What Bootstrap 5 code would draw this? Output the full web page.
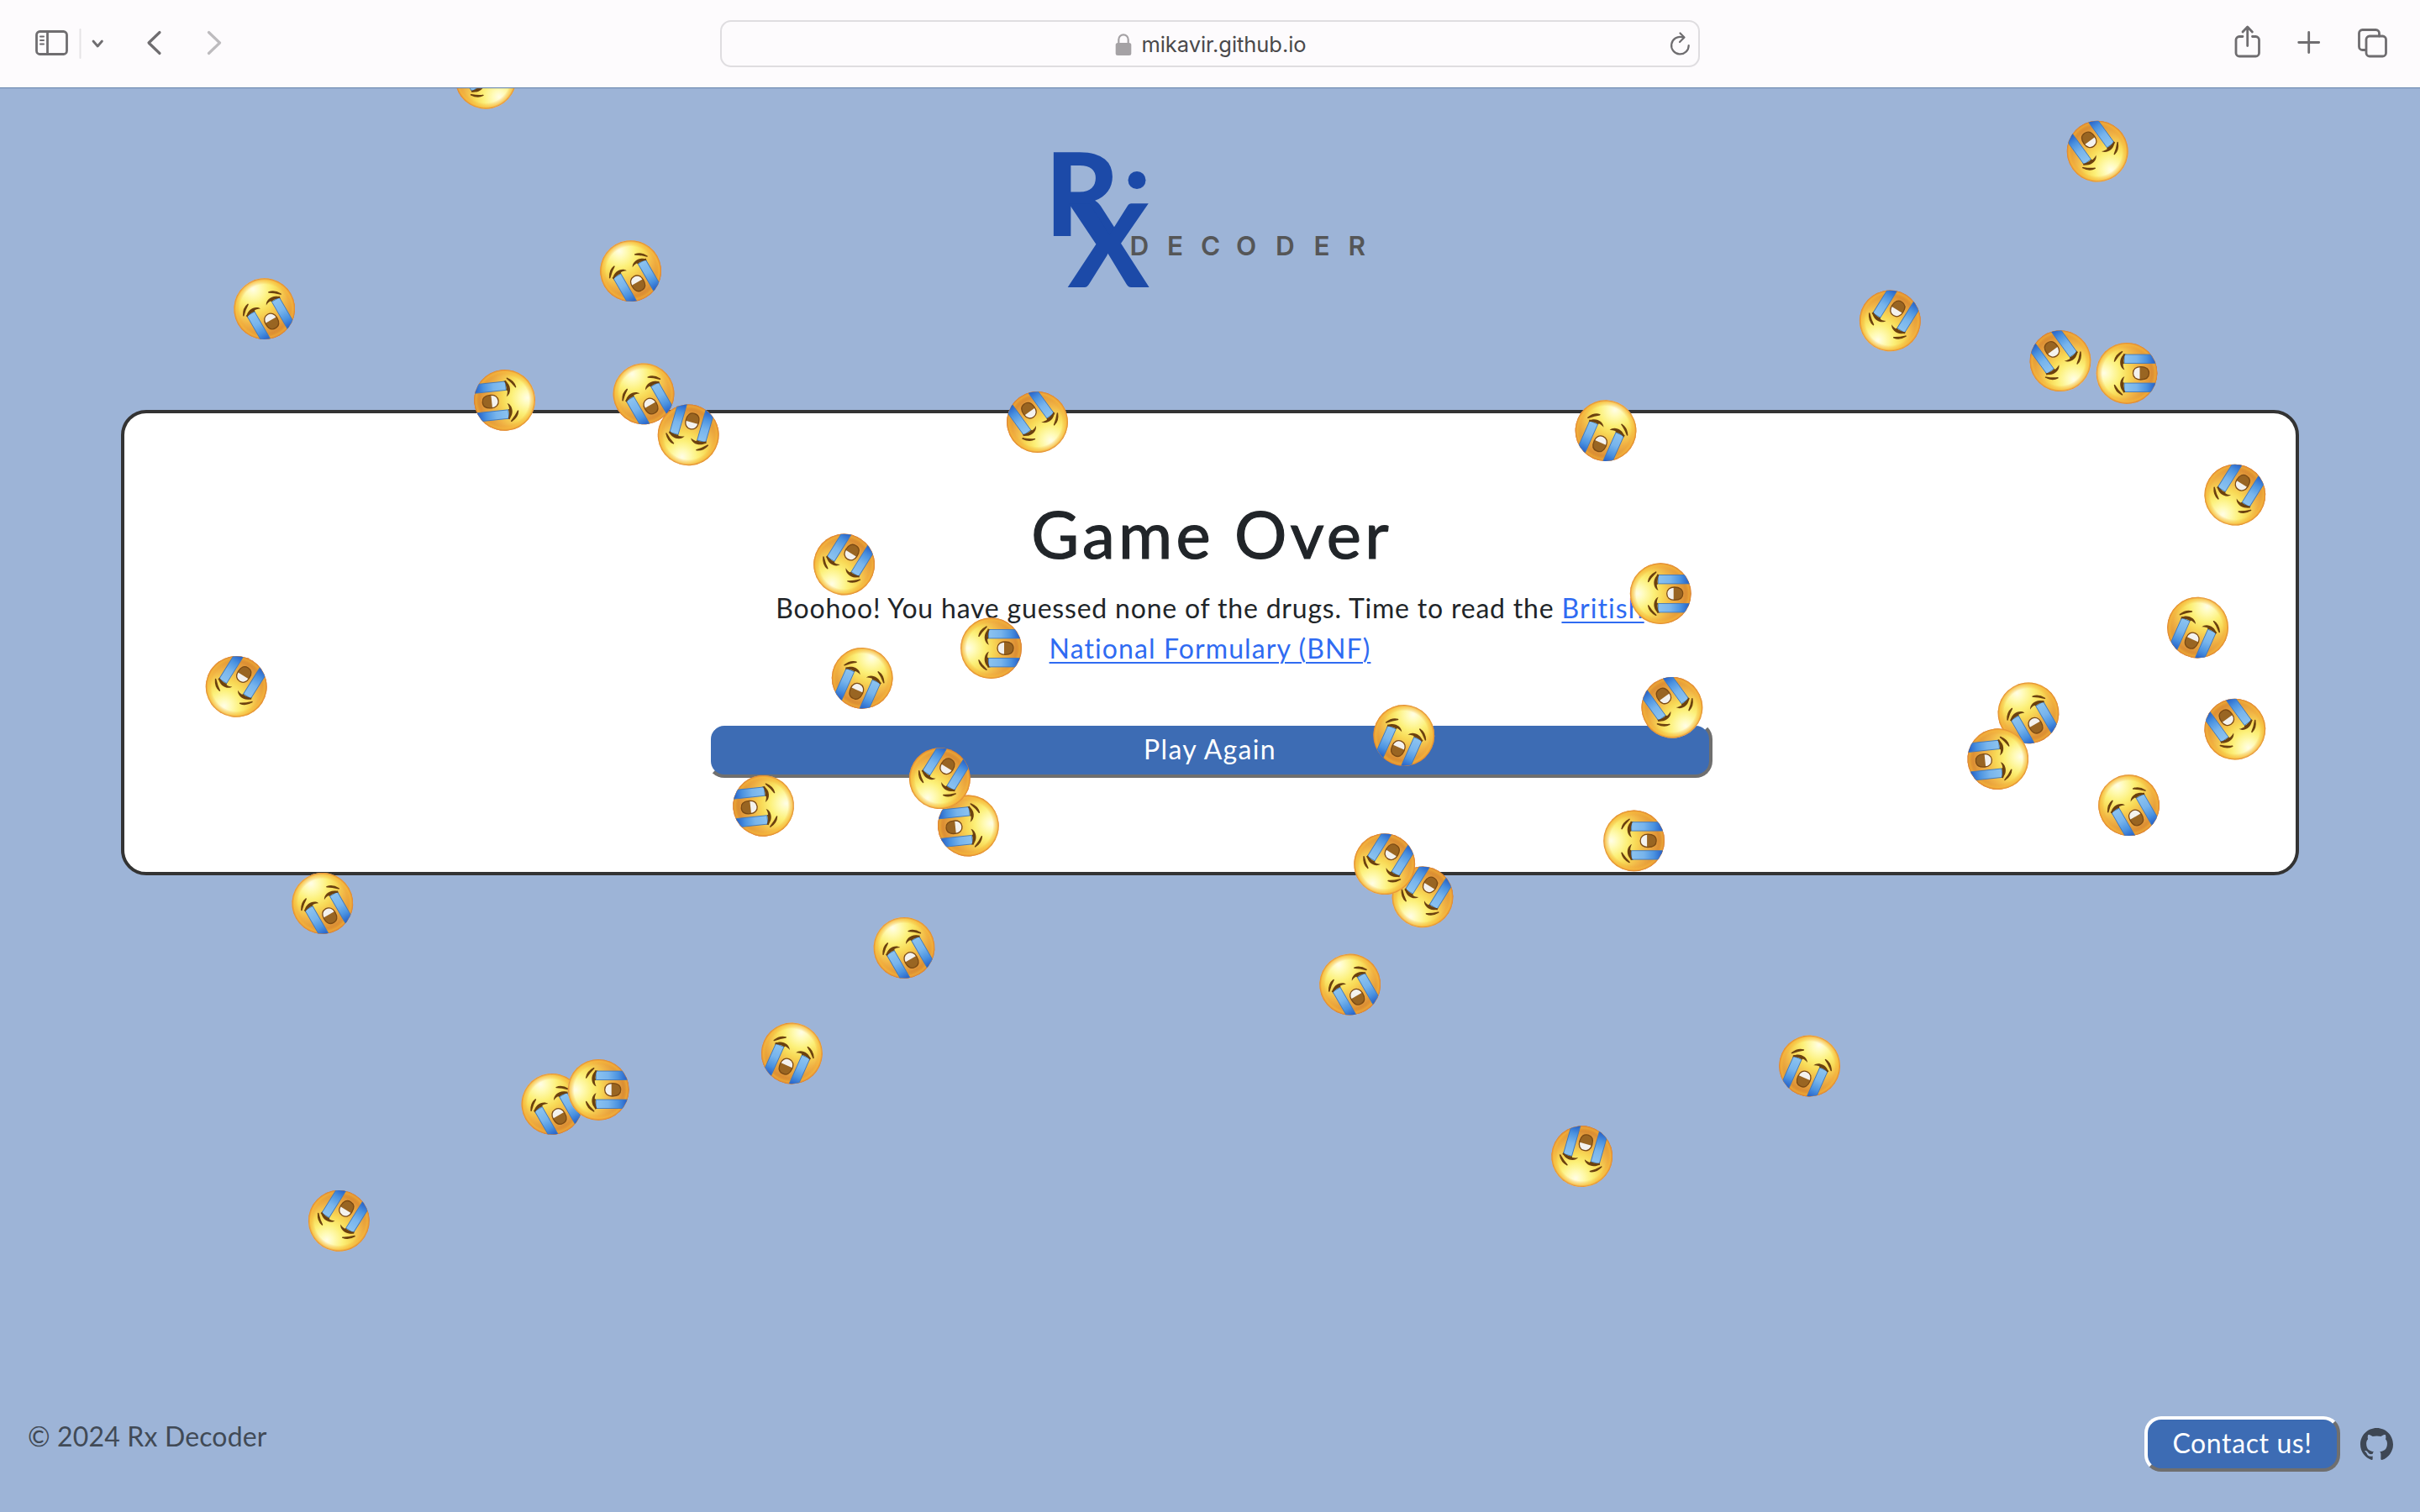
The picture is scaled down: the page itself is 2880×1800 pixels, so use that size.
<!DOCTYPE html>
<html lang="en">
<head>
<meta charset="utf-8">
<title>Rx Decoder</title>
<link rel="stylesheet" href="https://cdn.jsdelivr.net/npm/bootstrap@5.3.0/dist/css/bootstrap.min.css">
<style>
  body { background: #9db4d7; font-family: Lato, sans-serif; font-size: 32px; line-height: 48px; color: #212529; overflow: hidden; }
  .screen { width: 2880px; height: 1800px; }
  .toolbar { height: 104px; background: #fdfbfd; box-shadow: 0 1px 1px #6f8bb2; z-index: 5; }
  .toolbar svg { height: 104px; display: block; fill: none; stroke: #6f6d70; stroke-width: 2.8; stroke-linecap: round; stroke-linejoin: round; flex: none; }
  .side { flex: 1 1 0; }
  .address { width: 1166px; height: 56px; border: 2px solid #dfdde0; border-radius: 13px; font-family: Inter, sans-serif; font-size: 25.5px; letter-spacing: -.05px; color: #4a494b; }
  .address svg { height: 52px; }
  .address .lock { margin-right: 9px; }
  .address .host { padding-top: 1px; }
  .reload { right: 6px; top: 0; }
  .panel { width: 90%; height: 554px; border: 4px solid #333; border-radius: 30px; padding-top: 95px; }
  .panel h1 { font-size: 78px; line-height: 96px; font-weight: 400; -webkit-text-stroke: 1.2px #212529; letter-spacing: 4.2px; margin-right: -4px; margin-bottom: 17px; }
  .panel p { width: 1100px; margin-bottom: 64px; letter-spacing: .8px; }
  .panel a { color: #2f6bf2; letter-spacing: 1.1px; text-decoration-thickness: 2px; text-underline-offset: 4px; }
  .press { background: #3d6cb4; color: #fff; border: 4px solid; border-color: #fff #6f6f6f #6f6f6f #fff; border-radius: 20px; height: 66px; padding: 0 0 2px; line-height: 48px; }
  .play { width: 1196px; letter-spacing: 1.3px; }
  .contact { width: 233px; letter-spacing: .6px; }
  .foot { padding: 0 32px 48px 33px; color: #414a56; }
  .foot .copy { letter-spacing: .15px; padding-bottom: 18px; }
  .overlay { left: 0; top: 0; pointer-events: none; }
</style>
<script src="https://cdn.jsdelivr.net/npm/bootstrap@5.3.0/dist/js/bootstrap.bundle.min.js"></script>
</head>
<body>
<div class="screen d-flex flex-column">
  <header class="toolbar d-flex align-items-center position-relative">
    <div class="side d-flex">
      <svg width="97" viewBox="0 0 97 104"><rect x="43.5" y="37.5" width="36" height="27" rx="4"/><path d="M56.5 38v26"/><path stroke-width="2" d="M48 43.4h4M48 48h4M48 52.6h4"/><path d="M95.5 35v34" stroke="#e5e3e5" stroke-width="2"/></svg>
      <svg width="30" viewBox="97 0 30 104"><path d="M111 49l5.2 6 5.2-6"/></svg>
      <svg width="80" viewBox="127 0 80 104"><path stroke-width="3.2" d="M190 38.5l-13 12.5 13 12.5"/></svg>
      <svg width="80" viewBox="207 0 80 104"><path stroke-width="3.2" stroke="#bdbbbe" d="M248.5 38.5l13 12.5-13 12.5"/></svg>
    </div>
    <div class="address d-flex align-items-center justify-content-center position-relative">
      <svg class="lock" width="24" viewBox="1325 26 24 52"><rect x="1327.7" y="51" width="18.6" height="15" rx="2.5" fill="#a5a2a5" stroke="none"/><path stroke="#a5a2a5" stroke-width="2.2" d="M1331.3 51.5v-4.500a5.700 5.700 0 0 1 11.400 0v4.500"/></svg>
      <span class="host text-nowrap">mikavir.github.io</span>
      <svg class="reload position-absolute" width="30" viewBox="1983 26 30 52"><path stroke-width="2.2" d="M2000 44.200a10.300 10.300 0 1 0 7.700 9.800M1997.500 39.500l5 5-5.500 5.500"/></svg>
    </div>
    <div class="side d-flex justify-content-end">
      <svg width="60" viewBox="2650 0 60 104"><path d="M2669 43.500h-4a4 4 0 0 0-4 4v15.500a4 4 0 0 0 4 4h19.500a4 4 0 0 0 4-4v-15.500a4 4 0 0 0-4-4h-4M2674.700 54.500v-22M2669 38l5.700-6 5.700 6"/></svg>
      <svg width="70" viewBox="2710 0 70 104"><path d="M2747.700 38.500v24M2735.700 50.500h24"/></svg>
      <svg width="100" viewBox="2780 0 100 104"><rect x="2816" y="43" width="23.500" height="24" rx="4"/><path d="M2815.500 59.500h-4a4 4 0 0 1-4-4V39.500a4 4 0 0 1 4-4h16a4 4 0 0 1 4 4v3.500"/></svg>
    </div>
  </header>

  <main class="flex-grow-1 position-relative overflow-hidden d-flex flex-column align-items-center">
    <svg class="d-block flex-shrink-0" width="440" height="384" viewBox="1220 104 440 384">
      <g fill="#1c4aa8" font-family="Lato, sans-serif" font-weight="900" font-size="137">
        <text x="1243.500" y="280.500" font-size="136.500">R</text>
        <text x="1271" y="341.500" textLength="96.500" lengthAdjust="spacingAndGlyphs">X</text>
        <circle cx="1353" cy="214.500" r="10.500"/>
      </g>
      <text x="1344.500 1389 1429 1471 1518 1563.500 1604.500" y="304" font-family="Inter, sans-serif" font-weight="600" font-size="31.500" fill="#555657">DECODER</text>
    </svg>

    <section class="panel bg-white d-flex flex-column align-items-center text-center flex-shrink-0">
      <h1>Game Over</h1>
      <p>Boohoo! You have guessed none of the drugs. Time to read the <a href="#">British National Formulary (BNF)</a></p>
      <button class="press play">Play Again</button>
    </section>

    <footer class="foot w-100 mt-auto d-flex align-items-center">
      <span class="copy">© 2024 Rx Decoder</span>
      <button class="press contact ms-auto">Contact us!</button>
      <svg class="ms-4" width="39" height="39" viewBox="0 0 16 16" fill="#3e4754"><path d="M8 0C3.580 0 0 3.580 0 8c0 3.540 2.290 6.530 5.470 7.590.4.070.55-.17.55-.38 0-.19-.01-.82-.01-1.490-2.010.37-2.530-.49-2.690-.94-.09-.23-.48-.94-.82-1.130-.28-.15-.68-.52-.01-.53.63-.01 1.080.58 1.230.82.72 1.210 1.870.87 2.330.66.07-.52.28-.87.51-1.070-1.780-.2-3.640-.89-3.640-3.950 0-.87.31-1.590.82-2.150-.08-.2-.36-1.020.08-2.120 0 0 .67-.21 2.200.82.64-.18 1.320-.27 2-.27s1.360.09 2 .27c1.530-1.040 2.200-.82 2.200-.82.44 1.100.16 1.920.08 2.120.51.56.82 1.270.82 2.150 0 3.070-1.870 3.750-3.650 3.950.29.25.54.73.54 1.480 0 1.070-.01 1.930-.01 2.200 0 .21.15.46.55.38A8.010 8.010 0 0 0 16 8c0-4.420-3.580-8-8-8z"/></svg>
    </footer>

    <svg class="overlay position-absolute" width="2880" height="1696" viewBox="0 104 2880 1696">
      <defs>
        <radialGradient id="skin" gradientUnits="userSpaceOnUse" cx="0" cy="-27" r="64">
          <stop offset="0" stop-color="#fffde6"/><stop offset=".12" stop-color="#fffbb8"/><stop offset=".3" stop-color="#fcf078"/><stop offset=".46" stop-color="#f8d956"/><stop offset=".66" stop-color="#f0b245"/><stop offset=".85" stop-color="#e09638"/><stop offset="1" stop-color="#c46f28"/>
        </radialGradient>
        <radialGradient id="rim" gradientUnits="userSpaceOnUse" cx="0" cy="0" r="36.400">
          <stop offset=".8" stop-color="#f0a030" stop-opacity="0"/><stop offset=".93" stop-color="#f7b93a" stop-opacity=".65"/><stop offset="1" stop-color="#df8030"/>
        </radialGradient>
        <linearGradient id="tear" gradientUnits="userSpaceOnUse" x1="0" y1="-3" x2="0" y2="34">
          <stop offset="0" stop-color="#8cc3f0"/><stop offset=".4" stop-color="#77b4ec"/><stop offset=".72" stop-color="#4a92e0"/><stop offset="1" stop-color="#2560c8"/>
        </linearGradient>
        <clipPath id="round"><circle r="36.200"/></clipPath>
        <clipPath id="lips"><path d="M0 7.500c5 0 7.700 3.800 7.700 9 0 6.500-2.500 10-7.700 10s-7.700-3.500-7.700-10c0-5.200 2.700-9 7.700-9z"/></clipPath>
        <g id="half">
          <path d="M4 -2.600C6.500 -9 18.500 -10 22.800 -2.500L22.500 -.5C17 -5 9 -5.500 4 -2.600z" fill="#6b410f"/>
          <path d="M11.800 -3h10.400v38h-10.400z" fill="url(#tear)" stroke="#3f78bd" stroke-width=".9" clip-path="url(#round)"/>
          <path d="M11 -4.200q6 -1.800 11.800 1.500" fill="none" stroke="#6b410f" stroke-width="2.200"/>
          <path d="M14.300 -14.500Q21.500 -13.500 25.600 -5.500Q19.500 -11.600 14.300 -14.500z" fill="#6b410f" stroke="#6b410f" stroke-width="1.500" stroke-linejoin="round"/>
        </g>
        <g id="sob">
          <circle r="36.400" fill="url(#skin)"/><circle r="36.400" fill="url(#rim)"/>
          <use href="#half"/><use href="#half" transform="scale(-1 1)"/>
          <g clip-path="url(#lips)"><path d="M-9 6H9V28H-9z" fill="#996522"/><path d="M-9 6H9V15.500H-9z" fill="#f4f2ee"/></g>
          <path d="M0 7.500c5 0 7.700 3.800 7.700 9 0 6.500-2.500 10-7.700 10s-7.700-3.500-7.700-10c0-5.200 2.700-9 7.700-9z" fill="none" stroke="#7b4a14" stroke-width="1.300"/>
        </g>
      </defs>
      <use href="#sob" transform="translate(578 93.300) rotate(144)"/>
      <use href="#sob" transform="translate(314.700 367.700) rotate(-30)"/>
      <use href="#sob" transform="translate(750.600 322.600) rotate(-30)"/>
      <use href="#sob" transform="translate(600.600 476.400) rotate(84)"/>
      <use href="#sob" transform="translate(766 468.800) rotate(-30)"/>
      <use href="#sob" transform="translate(819.200 517.800) rotate(196)"/>
      <use href="#sob" transform="translate(2496.200 180.200) rotate(144)"/>
      <use href="#sob" transform="translate(2249.300 381.900) rotate(212)"/>
      <use href="#sob" transform="translate(2452 429.700) rotate(144)"/>
      <use href="#sob" transform="translate(2531 444.300) rotate(-90)"/>
      <use href="#sob" transform="translate(2659.800 589.200) rotate(212)"/>
      <use href="#sob" transform="translate(2615.600 747.100) rotate(24)"/>
      <use href="#sob" transform="translate(2414 848.900) rotate(-30)"/>
      <use href="#sob" transform="translate(2377.800 903.600) rotate(84)"/>
      <use href="#sob" transform="translate(2659.800 868.100) rotate(144)"/>
      <use href="#sob" transform="translate(2533.600 958.700) rotate(-30)"/>
      <use href="#sob" transform="translate(1911 512.700) rotate(24)"/>
      <use href="#sob" transform="translate(1976.200 706.700) rotate(-90)"/>
      <use href="#sob" transform="translate(1989.900 842.300) rotate(144)"/>
      <use href="#sob" transform="translate(1670.800 875.500) rotate(24)"/>
      <use href="#sob" transform="translate(1944.600 1000.900) rotate(-90)"/>
      <use href="#sob" transform="translate(1693 1067.900) rotate(212)"/>
      <use href="#sob" transform="translate(1647.700 1028.700) rotate(212)"/>
      <use href="#sob" transform="translate(1004.600 672) rotate(212)"/>
      <use href="#sob" transform="translate(1026.200 807.300) rotate(24)"/>
      <use href="#sob" transform="translate(1179.500 771.700) rotate(-90)"/>
      <use href="#sob" transform="translate(908.600 959.300) rotate(84)"/>
      <use href="#sob" transform="translate(1152.400 983) rotate(84)"/>
      <use href="#sob" transform="translate(1118.400 926.700) rotate(212)"/>
      <use href="#sob" transform="translate(281.200 817.400) rotate(212)"/>
      <use href="#sob" transform="translate(383.800 1075.400) rotate(-30)"/>
      <use href="#sob" transform="translate(1234.500 502.500) rotate(144)"/>
      <use href="#sob" transform="translate(1076 1128.300) rotate(-30)"/>
      <use href="#sob" transform="translate(942.400 1254) rotate(24)"/>
      <use href="#sob" transform="translate(657 1314.300) rotate(-30)"/>
      <use href="#sob" transform="translate(712.200 1297.300) rotate(-90)"/>
      <use href="#sob" transform="translate(403.300 1453.300) rotate(212)"/>
      <use href="#sob" transform="translate(1606.700 1172) rotate(-30)"/>
      <use href="#sob" transform="translate(2153.600 1269) rotate(24)"/>
      <use href="#sob" transform="translate(1882.700 1376.700) rotate(196)"/>
    </svg>
  </main>
</div>
</body>
</html>
